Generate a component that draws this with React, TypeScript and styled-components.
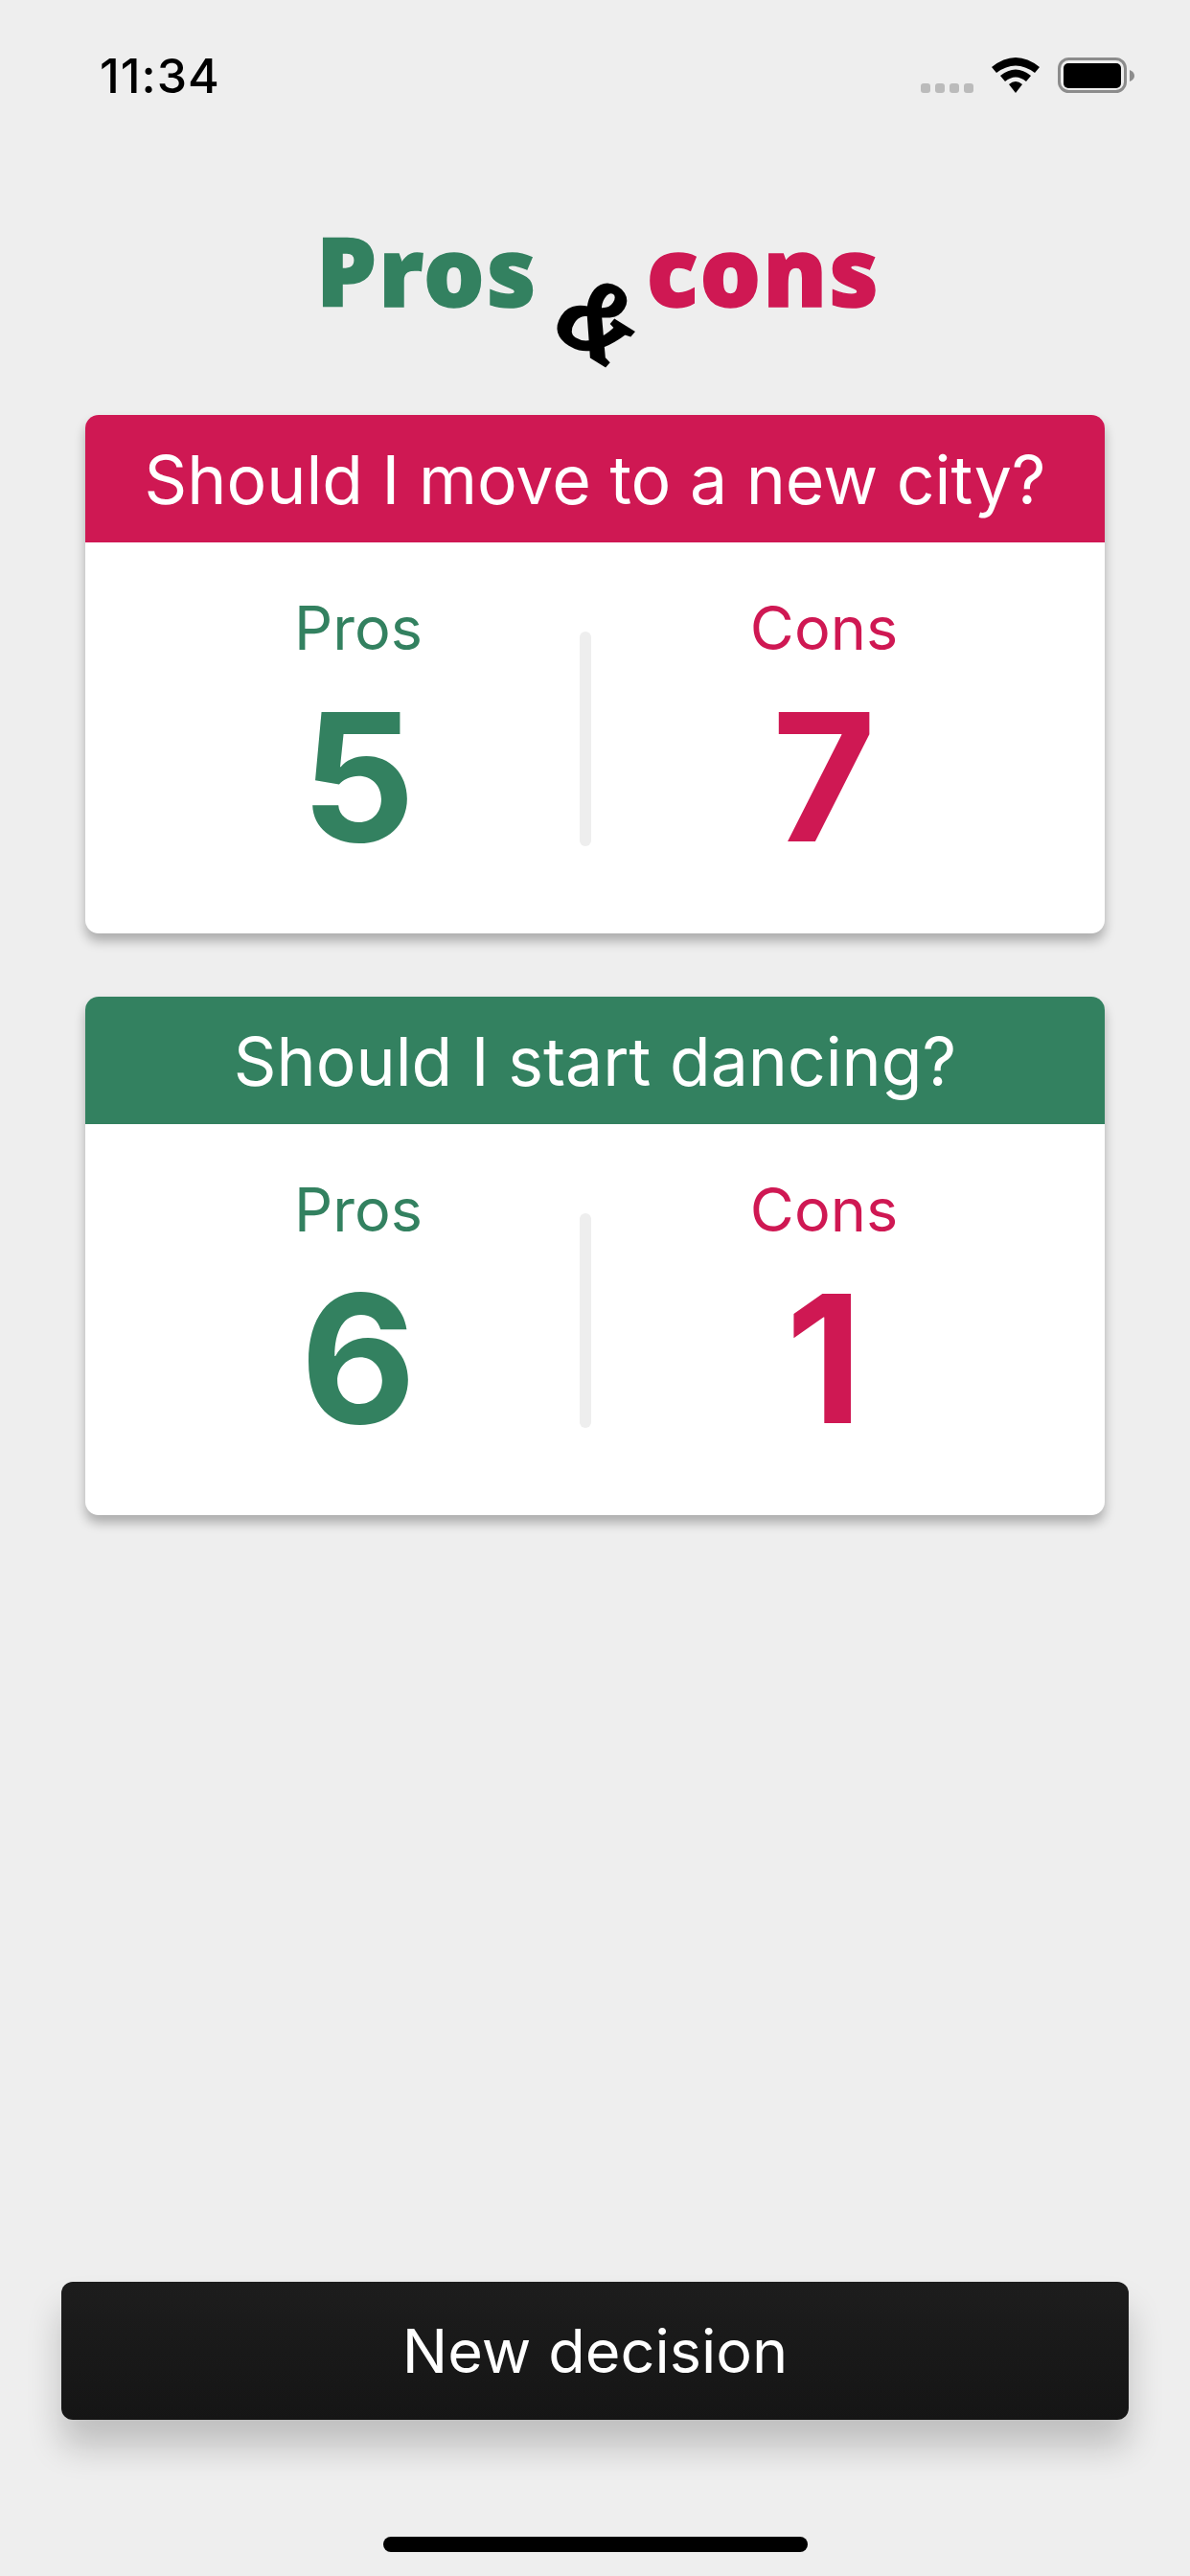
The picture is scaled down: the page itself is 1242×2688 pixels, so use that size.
import React from "react";
import styled, { createGlobalStyle } from "styled-components";

const GREEN = "#338160";
const RED = "#cf1853";

const Global = createGlobalStyle`
  html, body { margin: 0; padding: 0; background: #eeeeee; }
  * { box-sizing: border-box; }
`;

const Page = styled.div`
  width: 1242px;
  height: 2688px;
  overflow: hidden;
  background: #eeeeee;
  display: flex;
  flex-direction: column;
  font-family: Inter, "Liberation Sans", sans-serif;
`;

const StatusBar = styled.header`
  height: 100px;
  padding: 58px 56px 0 104px;
  display: flex;
  align-items: flex-start;
  justify-content: space-between;
`;

const Time = styled.span`
  font-size: 50px;
  line-height: 42px;
  font-weight: 500;
  letter-spacing: 1px;
  color: #000;
  font-family: Inter, sans-serif;
`;

const StatusIcons = styled.div`
  display: flex;
  align-items: flex-end;
  gap: 18px;
  height: 40px;
`;

const Dots = styled.div`
  display: flex;
  gap: 5px;
  padding-bottom: 1px;
`;

const Dot = styled.i`
  width: 10px;
  height: 10px;
  border-radius: 3px;
  background: #bbbbbb;
`;

const Logo = styled.div`
  height: 333px;
  padding: 119px 0 0 330px;
  display: flex;
  align-items: flex-start;
`;

const LogoWord = styled.span<{ $color: string }>`
  font-family: "Noto Sans", sans-serif;
  font-weight: 900;
  font-size: 100px;
  line-height: 124px;
  letter-spacing: 2px;
  color: ${(p) => p.$color};
  -webkit-text-stroke: 1.5px ${(p) => p.$color};
`;

const LogoAmp = styled.span`
  font-family: "Liberation Serif", serif;
  font-style: italic;
  font-weight: 700;
  font-size: 112px;
  line-height: 112px;
  color: #000;
  margin: 58px 5px 0 21px;
  transform: rotate(32deg) scaleX(0.85);
  -webkit-text-stroke: 4px #000;
`;

const Cards = styled.main`
  flex: 1;
  padding: 0 89px;
  display: flex;
  flex-direction: column;
  gap: 66px;
`;

const Card = styled.section`
  height: 541px;
  border-radius: 14px;
  background: #fff;
  box-shadow: 0 8px 12px rgba(0, 0, 0, 0.28);
  overflow: hidden;
`;

const CardTitle = styled.h2<{ $color: string }>`
  margin: 0;
  height: 133px;
  padding-top: 1px;
  background: ${(p) => p.$color};
  color: #fff;
  font-size: 69.7px;
  font-weight: 400;
  line-height: 133px;
  text-align: center;
`;

const Tally = styled.div`
  display: grid;
  grid-template-columns: 462px 12px 486px;
  padding: 50px 0 0 54px;
`;

const Column = styled.div<{ $color: string }>`
  display: flex;
  flex-direction: column;
  align-items: center;
  color: ${(p) => p.$color};
`;

const Label = styled.span`
  font-size: 63px;
  font-weight: 400;
  line-height: 78px;
`;

const Count = styled.span`
  font-size: 186px;
  font-weight: 700;
  line-height: 200px;
  margin-top: 17px;
`;

const Divider = styled.div`
  height: 224px;
  margin-top: 43px;
  border-radius: 6px;
  background: #eeeeee;
`;

const Footer = styled.footer`
  padding: 0 64px;
  display: flex;
  flex-direction: column;
  align-items: center;
`;

const NewButton = styled.button`
  width: 100%;
  height: 144px;
  border: 0;
  border-radius: 12px;
  background: linear-gradient(#1d1d1d, #151515);
  color: #fff;
  font-family: inherit;
  font-size: 63px;
  font-weight: 400;
  box-shadow: 0 28px 36px rgba(0, 0, 0, 0.2);
`;

const HomeBar = styled.div`
  width: 443px;
  height: 16px;
  border-radius: 8px;
  background: #000;
  margin: 122px 0 25px;
`;

const decisions = [
  { q: "Should I move to a new city?", pros: 5, cons: 7, color: RED },
  { q: "Should I start dancing?", pros: 6, cons: 1, color: GREEN },
];

const Wifi = () => (
  <svg width="52" height="40" viewBox="0 0 52 40">
    <path d="M1 12 Q26 -8 51 12 L46 18 Q26 3 6 18 Z" fill="#000" />
    <path d="M10 21 Q26 8 42 21 L37 27 Q26 18 15 27 Z" fill="#000" />
    <path d="M19 30 Q26 24 33 30 L26 39 Z" fill="#000" />
  </svg>
);

const Battery = () => (
  <svg width="82" height="38" viewBox="0 0 82 38">
    <rect x="1.5" y="1.5" width="69" height="34" rx="10" fill="none" stroke="#8c8c8c" strokeWidth="3" />
    <rect x="6" y="6" width="60" height="26" rx="5" fill="#000" />
    <path d="M75 13 Q80 15 80 19 Q80 23 75 25 Z" fill="#8c8c8c" />
  </svg>
);

export default function App() {
  return (
    <Page>
      <Global />
      <StatusBar>
        <Time>11:34</Time>
        <StatusIcons>
          <Dots>
            <Dot />
            <Dot />
            <Dot />
            <Dot />
          </Dots>
          <Wifi />
          <Battery />
        </StatusIcons>
      </StatusBar>
      <Logo>
        <LogoWord $color={GREEN}>Pros</LogoWord>
        <LogoAmp>&amp;</LogoAmp>
        <LogoWord $color={RED}>cons</LogoWord>
      </Logo>
      <Cards>
        {decisions.map((d) => (
          <Card key={d.q}>
            <CardTitle $color={d.color}>{d.q}</CardTitle>
            <Tally>
              <Column $color={GREEN}>
                <Label>Pros</Label>
                <Count>{d.pros}</Count>
              </Column>
              <Divider />
              <Column $color={RED}>
                <Label>Cons</Label>
                <Count>{d.cons}</Count>
              </Column>
            </Tally>
          </Card>
        ))}
      </Cards>
      <Footer>
        <NewButton>New decision</NewButton>
        <HomeBar />
      </Footer>
    </Page>
  );
}
